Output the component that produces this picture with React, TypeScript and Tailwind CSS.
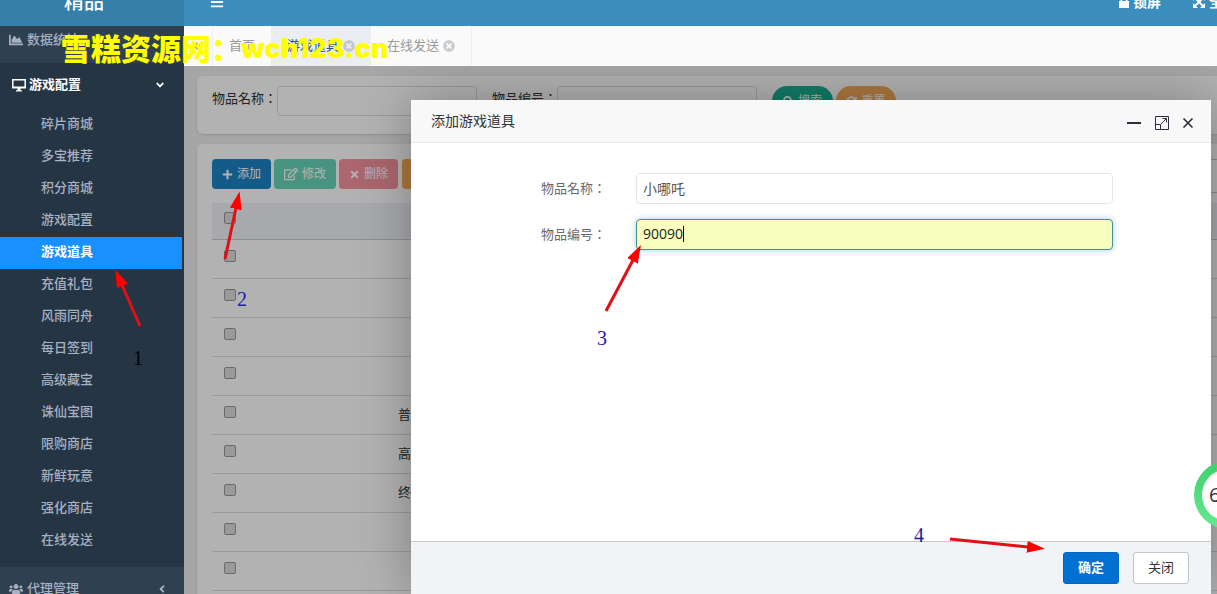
import type { ReactNode } from "react";
import {
  FaAngleDoubleLeft,
  FaAngleDown,
  FaAngleLeft,
  FaBars,
  FaChartArea,
  FaPlus,
  FaRegEdit,
  FaSearch,
  FaSyncAlt,
  FaTimes,
  FaTimesCircle,
  FaUsers,
} from "react-icons/fa";

const menuItems = [
  "碎片商城",
  "多宝推荐",
  "积分商城",
  "游戏配置",
  "游戏道具",
  "充值礼包",
  "风雨同舟",
  "每日签到",
  "高级藏宝",
  "诛仙宝图",
  "限购商店",
  "新鲜玩意",
  "强化商店",
  "在线发送",
];

const rows = ["", "", "", "", "普", "高", "终", "", "", ""];

const Header = () => (
  <header className="-mt-6 flex h-[50px] shrink-0 bg-[#3c8dbc] text-white">
    <a href="#" className="flex w-[184px] shrink-0 items-center justify-center bg-[#367fa9] pr-4 pt-px text-xl font-medium">
      精品
    </a>
    <nav className="flex min-w-0 flex-1 items-center pt-px text-sm font-bold">
      <button aria-label="菜单" className="ml-[26px]">
        <FaBars size={14} />
      </button>
      <a href="#" className="ml-auto flex shrink-0 items-center gap-1">
        <svg width="10" height="14" viewBox="0 0 10 14" fill="currentColor">
          <path d="M0 6h1.500V4a3.500 3.500 0 0 1 7 0v2H10v7H0zM3.200 6h3.600V4a1.800 1.800 0 0 0-3.600 0z" />
        </svg>
        锁屏
      </a>
      <a href="#" className="-mr-5 ml-8 flex shrink-0 items-center gap-1">
        <svg width="12" height="12" viewBox="0 0 12 12" fill="currentColor">
          <path d="M0 0h5L0 5zM12 0v5L7 0zM0 12V7l5 5zM12 12H7l5-5z" />
          <path d="M2 2l8 8M10 2l-8 8" stroke="currentColor" strokeWidth="2" />
        </svg>
        全屏
      </a>
    </nav>
  </header>
);

const Sidebar = () => (
  <aside className="flex w-[184px] shrink-0 flex-col overflow-hidden bg-[#2f4050] text-[13px] font-medium text-[#a7b1c2]">
    <a href="#" className="flex h-[37px] shrink-0 items-center gap-1 pb-[10px] pl-[9px]">
      <FaChartArea size={14} />
      数据统计
    </a>
    <div className="shrink-0 bg-[#263544] pb-[10px]">
      <a href="#" className="flex h-[46px] items-center pb-[2px] pl-3 pr-[18px] font-bold text-white">
        <svg width="14" height="13" viewBox="0 0 14 13" className="mr-[3px]">
          <path d="M.8.800h12.400v8H.8z" fill="none" stroke="currentColor" strokeWidth="1.500" />
          <path d="M1 7.500h12v1.500H1zM5.500 9h3v2.200h1.500V12.500H4V11.200h1.500z" fill="currentColor" />
        </svg>
        游戏配置
        <FaAngleDown size={12} className="ml-auto" />
      </a>
      <ul>
        {menuItems.map((item) => (
          <li key={item}>
            <a
              href="#"
              className={
                item === "游戏道具"
                  ? "mr-[2px] flex h-8 items-center bg-[#1890ff] pb-[2px] pl-[41px] font-bold text-white"
                  : "flex h-8 items-center pb-[2px] pl-[41px]"
              }
            >
              {item}
            </a>
          </li>
        ))}
      </ul>
    </div>
    <a href="#" className="flex h-[44px] shrink-0 items-center gap-1 pl-[9px] pr-4">
      <FaUsers size={14} />
      代理管理
      <FaAngleLeft size={12} className="ml-auto" />
    </a>
  </aside>
);

const TabBar = () => (
  <nav className="flex h-10 shrink-0 bg-[#fafafa] text-[13px] text-[#999]">
    <button aria-label="向左" className="flex w-[29px] items-center justify-center border-r border-[#eee]">
      <FaAngleDoubleLeft size={12} />
    </button>
    <a href="#" className="flex items-center px-4">
      首页
    </a>
    <a href="#" className="flex items-center gap-1 bg-[#eaedf1] px-4 text-[#23508e]">
      游戏道具
      <FaTimesCircle size={12} className="text-[#c3c7d4]" />
    </a>
    <a href="#" className="flex items-center gap-1 border-r border-[#eee] px-4">
      在线发送
      <FaTimesCircle size={12} className="text-[#ccc]" />
    </a>
  </nav>
);

const ToolButton = ({ className, children }: { className: string; children: ReactNode }) => (
  <button className={`flex h-[30px] items-center gap-1 rounded px-[10px] text-xs text-white ${className}`}>
    {children}
  </button>
);

const SearchPanel = () => (
  <form className="flex items-start rounded-md bg-white px-[15px] pb-[18px] pt-[10px] text-[13px] text-[#333] shadow">
    <label htmlFor="q-name" className="w-[65px] shrink-0 pt-[3px] font-['Open_Sans','Noto_Sans_CJK_TC',sans-serif]">
      物品名称：
    </label>
    <input id="q-name" className="h-[30px] w-[200px] rounded border border-[#ddd] px-2" />
    <label htmlFor="q-code" className="ml-[15px] w-[65px] shrink-0 pt-[3px] font-['Open_Sans','Noto_Sans_CJK_TC',sans-serif]">
      物品编号：
    </label>
    <input id="q-code" className="h-[30px] w-[200px] rounded border border-[#ddd] px-2" />
    <button type="button" className="ml-[15px] flex h-[30px] w-[61px] items-center justify-center gap-1 rounded-full bg-[#1ab394] text-xs text-white">
      <FaSearch size={11} />
      搜索
    </button>
    <button type="button" className="ml-[3px] flex h-[30px] w-[60px] items-center justify-center gap-1 rounded-full bg-[#f8ac59] text-xs text-white">
      <FaSyncAlt size={11} />
      重置
    </button>
  </form>
);

const DataPanel = () => (
  <section className="mt-[10px] rounded-md bg-white px-[15px] pt-[15px] text-[13px] text-[#333] shadow">
    <div className="flex h-[30px] gap-[3px]">
      <ToolButton className="bg-[#1c84c6]">
        <FaPlus size={11} />
        添加
      </ToolButton>
      <ToolButton className="bg-[#69d5b8]">
        <FaRegEdit size={14} />
        修改
      </ToolButton>
      <ToolButton className="bg-[#f5929e]">
        <FaTimes size={11} />
        删除
      </ToolButton>
      <ToolButton className="ml-px bg-[#f8ac59]">导出</ToolButton>
      <button aria-label="刷新" className="ml-auto h-[34px] w-10 rounded border border-[#ccc]" />
    </div>
    <table className="mt-[14px] w-full table-fixed border-collapse">
      <thead>
        <tr className="h-9 border-b border-[#ccc] bg-[#eff3f8]">
          <th className="w-9 pt-[9px] align-top">
            <input type="checkbox" aria-label="全选" className="mx-auto block size-3 appearance-none rounded-xs border border-[#999] bg-[#ddd]" />
          </th>
          <th />
        </tr>
      </thead>
      <tbody>
        {rows.map((name, i) => (
          <tr key={i} className="h-[39px] border-b border-[#ddd]">
            <td className="pt-[10px] align-top">
              <input type="checkbox" aria-label={`选择第${i + 1}行`} className="mx-auto block size-3 appearance-none rounded-xs border border-[#999] bg-[#ddd]" />
            </td>
            <td className="pl-[150px]">{name}</td>
          </tr>
        ))}
      </tbody>
    </table>
  </section>
);

const AddDialog = () => (
  <div
    role="dialog"
    aria-label="添加游戏道具"
    className="absolute bottom-0 right-[6px] top-[34px] flex w-[800px] flex-col bg-white shadow-[1px_1px_50px_rgba(0,0,0,0.3)]"
  >
    <div className="flex h-[43px] shrink-0 items-center border-b border-[#e8e8e8] bg-[#f8f8f8] pl-5 pr-[17px] text-[#333]">
      <h2 className="text-sm">添加游戏道具</h2>
      <div className="ml-auto flex items-center gap-[13px] pt-1">
        <button aria-label="最小化">
          <svg width="16" height="16" viewBox="0 0 16 16">
            <path d="M1 8h14" stroke="#2d2c3b" strokeWidth="2" />
          </svg>
        </button>
        <button aria-label="最大化">
          <svg width="14" height="14" viewBox="0 0 14 14" fill="none" stroke="#2d2c3b">
            <path d="M.5 8.500V.5h13v13h-8M.5 8.500h5v5h-5zM6 8l5.500-5.500M7.500 2.500h4v4" />
          </svg>
        </button>
        <button aria-label="关闭窗口">
          <svg width="12" height="12" viewBox="0 0 12 12" stroke="#2d2c3b" strokeWidth="1.600">
            <path d="M1.500 1.500l9 9M10.500 1.500l-9 9" />
          </svg>
        </button>
      </div>
    </div>
    <form className="flex flex-1 flex-col gap-[15px] pr-[98px] pt-[30px] text-[13px] text-[#676a6c]">
      <div className="flex items-center">
        <label htmlFor="item-name" className="w-[195px] shrink-0 text-right font-['Open_Sans','Noto_Sans_CJK_TC',sans-serif]">
          物品名称：
        </label>
        <input
          id="item-name"
          defaultValue="小哪吒"
          className="ml-[30px] h-[31px] min-w-0 flex-1 rounded border border-[#e5e6e7] px-[6px] pb-[2px] text-sm text-[#555] outline-none"
        />
      </div>
      <div className="flex items-center">
        <label htmlFor="item-code" className="w-[195px] shrink-0 text-right font-['Open_Sans','Noto_Sans_CJK_TC',sans-serif]">
          物品编号：
        </label>
        <div className="relative ml-[30px] flex min-w-0 flex-1">
          <input
            id="item-code"
            defaultValue="90090"
            className="h-[31px] min-w-0 flex-1 rounded border border-[#4a8f8c] bg-[#f8ffbe] px-[6px] pb-[2px] text-sm text-[#222] caret-transparent shadow-[0_0_6px_rgba(102,175,233,0.6)] outline-none"
          />
          <span className="absolute left-[47px] top-[7px] h-4 w-px bg-black" />
        </div>
      </div>
    </form>
    <div className="flex shrink-0 justify-end gap-[14px] border-t border-[#c5c9cc] bg-[#f0f4f7] py-[10px] pr-[22px] text-[13px]">
      <button className="h-8 w-14 rounded-[3px] border border-[#0067c0] bg-[#0070d2] font-bold text-white">确定</button>
      <button className="h-8 w-14 rounded-[3px] border border-[#c0c4cc] bg-white text-[#333]">关闭</button>
    </div>
  </div>
);

const Annotations = () => (
  <div className="pointer-events-none absolute inset-0 overflow-hidden font-['Liberation_Serif',serif] text-xl leading-5 text-[#1a1aa8]">
    <svg className="absolute inset-0 h-full w-full" stroke="#e01015" strokeWidth="3">
      <defs>
        <marker id="head" markerUnits="userSpaceOnUse" markerWidth="18" markerHeight="12" refX="1" refY="6" orient="auto">
          <path d="M0 0L18 6L0 12z" fill="#f00" stroke="none" />
        </marker>
      </defs>
      <path d="M140 326L122 285" markerEnd="url(#head)" />
      <path d="M225 259L236 208" markerEnd="url(#head)" />
      <path d="M606 311L633 260" markerEnd="url(#head)" />
      <path d="M950 539L1028 547" markerEnd="url(#head)" />
    </svg>
    <span className="absolute left-[133px] top-[348px] text-black">1</span>
    <span className="absolute left-[237px] top-[289px]">2</span>
    <span className="absolute left-[597px] top-[328px]">3</span>
    <span className="absolute left-[914px] top-[525px]">4</span>
    <div className="absolute left-[61px] top-[29px] flex items-center whitespace-nowrap font-black leading-8 text-[#ff0]">
      <span className="font-['Noto_Sans_CJK_SC',sans-serif] text-[30px]">雪糕资源网：</span>
      <span className="pt-1 font-['Inter',sans-serif] text-[27px]">wch123.cn</span>
    </div>
    <div className="absolute -right-[45px] top-[461px] size-[68px] rounded-full bg-linear-to-b from-[#3fcf6c] to-[#66e892] p-2 font-['Open_Sans',sans-serif] text-[#333]">
      <div className="flex size-full items-center rounded-full bg-white pl-[7px]">66</div>
    </div>
  </div>
);

const App = () => {
  return (
    <div className="relative flex h-screen flex-col overflow-hidden font-['Open_Sans','Noto_Sans_CJK_SC',sans-serif]">
      <Header />
      <div className="flex min-h-0 flex-1">
        <Sidebar />
        <div className="flex min-w-0 flex-1 flex-col">
          <TabBar />
          <main className="relative flex-1 overflow-hidden bg-[#eee]">
            <div className="-mr-5 pl-[13px] pt-[10px]">
              <SearchPanel />
              <DataPanel />
            </div>
            <div className="absolute inset-0 bg-black/30" />
            <AddDialog />
          </main>
        </div>
      </div>
      <Annotations />
    </div>
  );
};

export default App;
